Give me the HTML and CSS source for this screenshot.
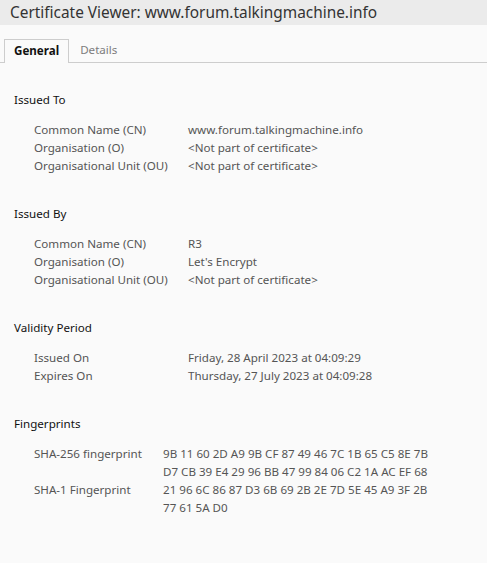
FILE: index.html
```html
<!DOCTYPE html>
<html lang="en">
<head>
  <meta charset="UTF-8" />
  <title>Certificate Viewer</title>
  <link rel="stylesheet" href="styles.css">
</head>
<body>

  <div class="titlebar">Certificate Viewer: www.forum.talkingmachine.info</div>

  <div class="tabs">
    <div class="tab active">General</div>
    <div class="tab">Details</div>
  </div>

  <div class="content">
    <div class="section">
      <div class="section-title">Issued To</div>
      <div class="rows">
        <div class="label">Common Name (CN)</div><div class="value">www.forum.talkingmachine.info</div>
        <div class="label">Organisation (O)</div><div class="value">&lt;Not part of certificate&gt;</div>
        <div class="label">Organisational Unit (OU)</div><div class="value">&lt;Not part of certificate&gt;</div>
      </div>
    </div>

    <div class="section">
      <div class="section-title">Issued By</div>
      <div class="rows">
        <div class="label">Common Name (CN)</div><div class="value">R3</div>
        <div class="label">Organisation (O)</div><div class="value">Let's Encrypt</div>
        <div class="label">Organisational Unit (OU)</div><div class="value">&lt;Not part of certificate&gt;</div>
      </div>
    </div>

    <div class="section">
      <div class="section-title">Validity Period</div>
      <div class="rows">
        <div class="label">Issued On</div><div class="value">Friday, 28 April 2023 at 04:09:29</div>
        <div class="label">Expires On</div><div class="value">Thursday, 27 July 2023 at 04:09:28</div>
      </div>
    </div>

    <div class="section">
      <div class="section-title">Fingerprints</div>
      <div class="rows fingerprints">
        <div class="label">SHA-256 fingerprint</div>
        <div class="value">9B 11 60 2D A9 9B CF 87 49 46 7C 1B 65 C5 8E 7B<br>D7 CB 39 E4 29 96 BB 47 99 84 06 C2 1A AC EF 68</div>
        <div class="label">SHA-1 Fingerprint</div>
        <div class="value">21 96 6C 86 87 D3 6B 69 2B 2E 7D 5E 45 A9 3F 2B<br>77 61 5A D0</div>
      </div>
    </div>
  </div>

</body>
</html>
```

FILE: styles.css
```css
body {
  margin: 0;
  font-family: 'Noto Sans', 'DejaVu Sans', sans-serif;
  font-size: 11.6px;
  background: #fafafa;
  color: #555;
  height: 563px;
  overflow: hidden;
}

.titlebar {
  height: 25px;
  line-height: 25px;
  padding-left: 10px;
  background: #ebebeb;
  color: #333;
  font-size: 15.4px;
}

/* Notebook tabs */
.tabs {
  display: flex;
  margin-top: 14px;
  padding-left: 4px;
  border-bottom: 1px solid #cdcdcd;
}

.tab {
  height: 22px;
  line-height: 22px;
  padding: 0 9px;
  color: #7d7d7d;
}

.tab.active {
  border: 1px solid #cdcdcd;
  border-bottom: none;
  margin-bottom: -1px;
  height: 23px;
  padding: 0 9px 0 9px;
  margin-right: 2px;
  background: #fafafa;
  color: #111;
  font-weight: bold;
}

.content {
  padding: 28px 0 0 14px;
}

.section {
  margin-bottom: 30px;
}

.section-title {
  line-height: 18px;
  color: #111;
  margin-bottom: 12px;
}

.rows {
  display: grid;
  grid-template-columns: 154px 1fr;
  line-height: 18px;
  padding-left: 20px;
}

.rows.fingerprints {
  grid-template-columns: 129px 1fr;
}
```
